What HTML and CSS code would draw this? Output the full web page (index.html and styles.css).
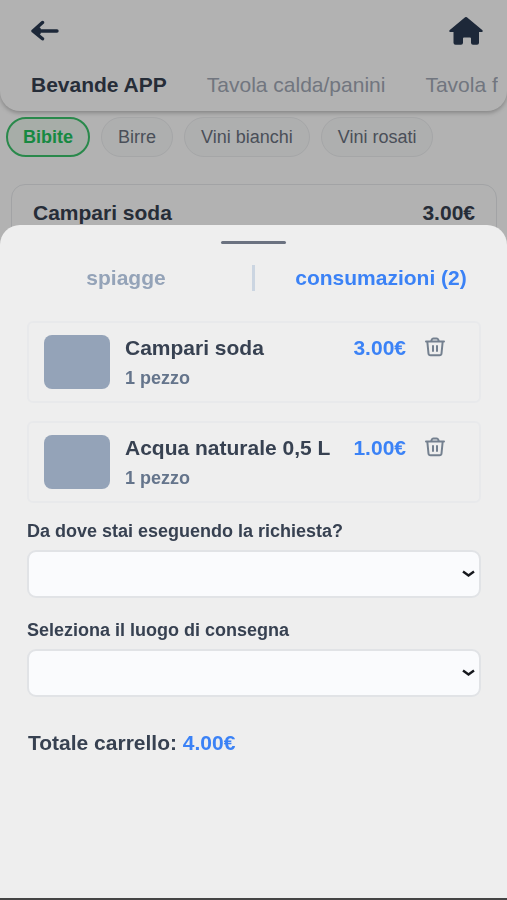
FILE: index.html
```html
<!DOCTYPE html>
<html lang="it">
<head>
<meta charset="utf-8">
<meta name="viewport" content="width=device-width, initial-scale=1">
<title>Bevande APP</title>
<link rel="stylesheet" href="styles.css">
</head>
<body>
<div class="page">
  <header class="header">
    <div class="topbar">
      <button class="icon-btn" type="button" aria-label="Indietro">
        <svg width="28" height="22" viewBox="0 0 28 22" fill="none" stroke="currentColor" stroke-width="3.400" stroke-linecap="round" stroke-linejoin="round"><path d="M11.500 2.500 2 11l9.500 7.800M2 11h24M5 11l3-2M5 11l3 2"/></svg>
      </button>
      <a class="icon-btn" href="#" aria-label="Home">
        <svg width="34" height="28" viewBox="0 0 34 28" fill="currentColor"><path d="M15.800.500a1.800 1.800 0 0 1 2.400 0L33.200 13c1 .9.600 2-.8 2H30v10.700a2 2 0 0 1-2 2h-4a2 2 0 0 1-2-2v-4.200a1 1 0 0 0-1-1h-6a1 1 0 0 0-1 1v4.200a2 2 0 0 1-2 2H6.500a2 2 0 0 1-2-2V15H1.600C.2 15-.2 13.900.8 13Z"/></svg>
      </a>
    </div>
    <nav class="tabs">
      <a class="tab tab-active" href="#">Bevande APP</a>
      <a class="tab" href="#">Tavola calda/panini</a>
      <a class="tab" href="#">Tavola f</a>
    </nav>
  </header>
  <nav class="chips">
    <button class="chip chip-active" type="button">Bibite</button>
    <button class="chip" type="button">Birre</button>
    <button class="chip" type="button">Vini bianchi</button>
    <button class="chip" type="button">Vini rosati</button>
  </nav>
  <main class="product">
    <span>Campari soda</span>
    <span>3.00€</span>
  </main>
</div>
<div class="backdrop"></div>
<section class="sheet" aria-label="Carrello">
  <div class="handle"></div>
  <div class="switch">
    <button class="switch-btn" type="button">spiagge</button>
    <span class="divider"></span>
    <button class="switch-btn switch-active" type="button">consumazioni (2)</button>
  </div>
  <div class="content">
    <ul class="items">
      <li class="item">
        <div class="thumb"></div>
        <div class="info">
          <span class="name">Campari soda</span>
          <span class="qty">1 pezzo</span>
        </div>
        <span class="price">3.00€</span>
        <button class="trash" type="button" aria-label="Rimuovi Campari soda">
          <svg width="20" height="20" viewBox="0 0 20 20" fill="none" stroke="currentColor" stroke-width="2" stroke-linecap="round" stroke-linejoin="round"><path d="M1 4.500h18M6 4.500l.8-2A1.700 1.700 0 0 1 8.400 1.400h3.200a1.700 1.700 0 0 1 1.600 1.100l.8 2M2.300 4.500l1.200 12a2 2 0 0 0 2 1.800h9a2 2 0 0 0 2-1.800l1.200-12M8 9v5M12 9v5"/></svg>
        </button>
      </li>
      <li class="item">
        <div class="thumb"></div>
        <div class="info">
          <span class="name">Acqua naturale 0,5 L</span>
          <span class="qty">1 pezzo</span>
        </div>
        <span class="price">1.00€</span>
        <button class="trash" type="button" aria-label="Rimuovi Acqua naturale 0,5 L">
          <svg width="20" height="20" viewBox="0 0 20 20" fill="none" stroke="currentColor" stroke-width="2" stroke-linecap="round" stroke-linejoin="round"><path d="M1 4.500h18M6 4.500l.8-2A1.700 1.700 0 0 1 8.400 1.400h3.200a1.700 1.700 0 0 1 1.600 1.100l.8 2M2.300 4.500l1.200 12a2 2 0 0 0 2 1.800h9a2 2 0 0 0 2-1.800l1.200-12M8 9v5M12 9v5"/></svg>
        </button>
      </li>
    </ul>
    <div class="field">
      <label for="origin">Da dove stai eseguendo la richiesta?</label>
      <div class="select-wrap">
        <select id="origin"><option></option></select>
        <svg class="caret" width="13" height="8" viewBox="0 0 13 8" fill="none" stroke="currentColor" stroke-width="2.400"><path d="M1 1.500 6.500 5.500 12 1.500"/></svg>
      </div>
    </div>
    <div class="field">
      <label for="place">Seleziona il luogo di consegna</label>
      <div class="select-wrap">
        <select id="place"><option></option></select>
        <svg class="caret" width="13" height="8" viewBox="0 0 13 8" fill="none" stroke="currentColor" stroke-width="2.400"><path d="M1 1.500 6.500 5.500 12 1.500"/></svg>
      </div>
    </div>
    <p class="total">Totale carrello: <strong>4.00€</strong></p>
  </div>
</section>
</body>
</html>
```
FILE: styles.css
```css
* {
  box-sizing: border-box;
}

body {
  margin: 0;
  height: 100vh;
  overflow: hidden;
  background: #ffffff;
  color: #374151;
  font-family: "Liberation Sans", Arial, sans-serif;
}

button {
  padding: 0;
  border: 0;
  background: none;
  font: inherit;
}

a {
  color: inherit;
  text-decoration: none;
}

svg {
  display: block;
}

.header {
  padding: 16px 9px 14px 31px;
  border-radius: 0 0 20px 20px;
  background: #ffffff;
  box-shadow: 0 2px 4px rgba(0, 0, 0, 0.25);
}

.topbar {
  display: flex;
  align-items: center;
  justify-content: space-between;
  height: 29px;
  padding-right: 15px;
}

.icon-btn {
  color: #2a3a52;
}

.tabs {
  display: flex;
  gap: 40px;
  margin-top: 28px;
  overflow: hidden;
  font-size: 21px;
  line-height: 24px;
  white-space: nowrap;
}

.tab {
  color: #a3a9b6;
}

.tab-active {
  color: #374151;
  font-weight: 700;
}

.chips {
  display: flex;
  gap: 11px;
  padding: 6px;
}

.chip {
  flex: none;
  height: 40px;
  padding: 0 16px;
  border: 1px solid #eceef0;
  border-radius: 20px;
  background: #fafbfb;
  color: #6b7280;
  font-size: 18px;
}

.chip-active {
  padding: 0 15px;
  border: 2px solid #3cc46c;
  background: #f0f8f1;
  color: #22c55e;
  font-weight: 700;
}

.product {
  display: flex;
  justify-content: space-between;
  margin: 21px 10px 0 11px;
  padding: 15px 21px;
  border: 1px solid #e8eaed;
  border-radius: 14px;
  font-size: 21px;
  font-weight: 700;
  line-height: 26px;
}

.backdrop {
  position: fixed;
  inset: 0;
  background: rgba(0, 0, 0, 0.3);
}

.sheet {
  position: fixed;
  inset: auto 0 0;
  height: 75vh;
  overflow: hidden;
  border-bottom: 2px solid #444444;
  border-radius: 20px 20px 0 0;
  background: #eeeeee;
  font-weight: 700;
}

.handle {
  width: 65px;
  height: 3px;
  margin: 16px auto 0;
  border-radius: 2px;
  background: #6b7280;
}

.switch {
  display: grid;
  grid-template-columns: 1fr 3px 1fr;
  align-items: center;
  margin-top: 21px;
  font-size: 21px;
  line-height: 26px;
}

.switch-btn {
  color: #94a3b8;
}

.switch-active {
  color: #3b82f6;
}

.divider {
  height: 26px;
  background: #cbd5e1;
}

.content {
  padding: 30px 26px 0 27px;
}

.items {
  display: grid;
  gap: 18px;
  margin: 0;
  padding: 0;
  list-style: none;
}

.item {
  display: flex;
  align-items: flex-start;
  height: 82px;
  padding: 12px 34px 12px 15px;
  border: 2px solid #e8e9eb;
  border-radius: 6px;
}

.thumb {
  flex: none;
  width: 66px;
  height: 54px;
  border-radius: 8px;
  background: #94a3b8;
}

.info {
  display: flex;
  flex: 1;
  flex-direction: column;
  gap: 5px;
  min-width: 0;
  padding-left: 15px;
}

.name,
.price {
  font-size: 21px;
  line-height: 26px;
  white-space: nowrap;
}

.qty {
  color: #64748b;
  font-size: 18px;
  line-height: 24px;
}

.price {
  margin-right: 19px;
  color: #3b82f6;
}

.trash {
  margin-top: 2px;
  color: #74808f;
}

.field {
  margin-top: 16px;
}

.field label {
  display: block;
  font-size: 18px;
  line-height: 24px;
}

.select-wrap {
  position: relative;
  margin-top: 7px;
}

.field select {
  display: block;
  width: 100%;
  height: 48px;
  padding: 0 32px 0 12px;
  border: 2px solid #e1e3e6;
  border-radius: 9px;
  background: #fafbfd;
  color: #111827;
  font-size: 18px;
  appearance: none;
}

.caret {
  position: absolute;
  top: 20px;
  right: 6px;
  color: #16181d;
  pointer-events: none;
}

.field + .field {
  margin-top: 20px;
}

.total {
  margin: 33px 1px 0;
  font-size: 21px;
  line-height: 26px;
}

.total strong {
  color: #3b82f6;
}
```
